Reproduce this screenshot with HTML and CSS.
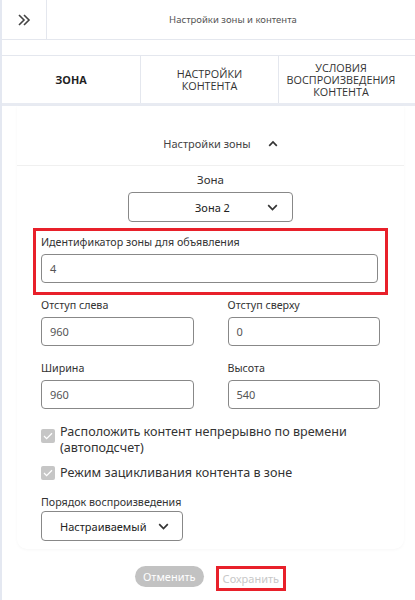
FILE: index.html
```html
<!DOCTYPE html>
<html lang="ru">
  <head>
    <meta charset="UTF-8" />
    <meta name="viewport" content="width=device-width, initial-scale=1.0" />
    <title>Настройки зоны и контента</title>
    <link rel="stylesheet" href="styles.css">
  </head>
  <body>
    <div class="page">
      <!-- верхняя панель -->
      <div class="topbar">
        <div class="toggle">
          <svg width="14" height="14" viewBox="0 0 14 14">
            <path d="M2 2l5 5-5 5M7 2l5 5-5 5" fill="none" stroke="#444" stroke-width="1.6" />
          </svg>
        </div>
        <div class="topbar-title">Настройки зоны и контента</div>
      </div>
      <div class="spacer"></div>

      <!-- вкладки -->
      <div class="tabs">
        <div class="tab active">ЗОНА</div>
        <div class="tab">НАСТРОЙКИ<br />КОНТЕНТА</div>
        <div class="tab">УСЛОВИЯ<br />ВОСПРОИЗВЕДЕНИЯ<br />КОНТЕНТА</div>
      </div>

      <div class="content">
        <div class="card">
          <div class="card-head">
            Настройки зоны
            <svg width="10" height="7" viewBox="0 0 10 7">
              <path d="M1.2 5.8L5 2l3.8 3.8" fill="none" stroke="#333" stroke-width="1.7" />
            </svg>
          </div>

          <div class="zone-select">
            <div class="zone-label">Зона</div>
            <div class="select zone">
              <span>Зона 2</span>
              <svg width="11" height="7" viewBox="0 0 11 7">
                <path d="M1.2 1.2L5.5 5.5l4.3-4.3" fill="none" stroke="#333" stroke-width="1.7" />
              </svg>
            </div>
          </div>

          <!-- выделенное поле -->
          <div class="highlight">
            <label class="field-label">Идентификатор зоны для объявления</label>
            <div class="input">4</div>
          </div>

          <div class="row">
            <div class="field">
              <label class="field-label">Отступ слева</label>
              <div class="input">960</div>
            </div>
            <div class="field">
              <label class="field-label">Отступ сверху</label>
              <div class="input">0</div>
            </div>
          </div>

          <div class="row">
            <div class="field">
              <label class="field-label">Ширина</label>
              <div class="input">960</div>
            </div>
            <div class="field">
              <label class="field-label">Высота</label>
              <div class="input">540</div>
            </div>
          </div>

          <div class="check first">
            <span class="box">
              <svg width="10" height="8" viewBox="0 0 10 8">
                <path d="M1 4l2.6 2.6L9 1.2" fill="none" stroke="#fff" stroke-width="1.3" />
              </svg>
            </span>
            <span>Расположить контент непрерывно по времени (автоподсчет)</span>
          </div>
          <div class="check second">
            <span class="box">
              <svg width="10" height="8" viewBox="0 0 10 8">
                <path d="M1 4l2.6 2.6L9 1.2" fill="none" stroke="#fff" stroke-width="1.3" />
              </svg>
            </span>
            <span>Режим зацикливания контента в зоне</span>
          </div>

          <div class="order">
            <label class="field-label">Порядок воспроизведения</label>
            <div class="select order-select">
              <span>Настраиваемый</span>
              <svg width="11" height="7" viewBox="0 0 11 7">
                <path d="M1.2 1.2L5.5 5.5l4.3-4.3" fill="none" stroke="#333" stroke-width="1.7" />
              </svg>
            </div>
          </div>
        </div>

        <!-- кнопки -->
        <div class="actions">
          <button class="btn-cancel">Отменить</button>
          <button class="btn-save">Сохранить</button>
        </div>
      </div>
    </div>
  </body>
</html>
```

FILE: styles.css
```css
/* базовые стили */
body {
  margin: 0;
  font-family: "Noto Sans", sans-serif;
  color: #333;
  background-color: #fff;
}

.page {
  width: 413px;
  min-height: 600px;
  border-left: 2px solid #e4e8f1;
}

/* верхняя панель */
.topbar {
  display: flex;
  height: 39px;
  border-bottom: 1px solid #e4e7ee;
}

.toggle {
  width: 44px;
  display: flex;
  align-items: center;
  justify-content: center;
  border-right: 1px solid #e4e7ee;
}

.topbar-title {
  flex: 1;
  display: flex;
  align-items: center;
  justify-content: center;
  padding-left: 4px;
  font-size: 9.5px;
  color: #555;
}

.spacer {
  height: 15px;
  border-bottom: 1px solid #e4e7ee;
}

/* вкладки */
.tabs {
  display: flex;
  height: 47px;
  border-bottom: 3px solid #e8ebf2;
}

.tab {
  display: flex;
  align-items: center;
  justify-content: center;
  text-align: center;
  font-family: "Open Sans", sans-serif;
  font-size: 10.8px;
  line-height: 12px;
  color: #333;
  border-right: 1px solid #e4e7ee;
}

.tab:nth-child(1) {
  width: 138px;
}

.tab:nth-child(2) {
  width: 137px;
}

.tab:nth-child(3) {
  width: 124px;
  border-right: none;
}

.tab.active {
  font-weight: 700;
  color: #222;
}

/* карточка */
.content {
  padding: 0 11px 0 15px;
}

.card {
  background-color: #fff;
  border-radius: 0 0 10px 10px;
  box-shadow: 0 1px 3px rgba(0, 0, 0, 0.035);
  padding: 0 24px 8px 24px;
}

.card-head {
  height: 44px;
  display: flex;
  align-items: center;
  justify-content: center;
  gap: 17px;
  padding-left: 20px;
  padding-top: 15px;
  margin: 0 -24px;
  border-bottom: 1px solid #f0f0f0;
  font-size: 11px;
  color: #444;
}

.zone-select {
  display: flex;
  flex-direction: column;
  align-items: center;
  padding-top: 6px;
}

.zone-label {
  font-size: 11.5px;
  line-height: 16px;
  margin-bottom: 4px;
}

.select {
  box-sizing: border-box;
  display: flex;
  align-items: center;
  border: 1px solid #888;
  border-radius: 4px;
  font-size: 11px;
  color: #222;
}

.select.zone {
  width: 165px;
  height: 30px;
  padding: 0 14px 0 66px;
  justify-content: space-between;
}

/* поля */
.highlight {
  margin: 6px -8px 0 -8px;
  border: 3px solid #e8202a;
  padding: 3px 7px 9px 5px;
}

.field-label {
  display: block;
  font-size: 10.7px;
  line-height: 16px;
  margin-bottom: 4px;
  color: #333;
}

.input {
  box-sizing: border-box;
  height: 29px;
  border: 1px solid #888;
  border-radius: 4px;
  padding: 0 8px;
  display: flex;
  align-items: center;
  font-size: 11px;
  color: #555;
}

.row {
  display: flex;
  gap: 34px;
  margin-top: 2px;
}

.row + .row {
  margin-top: 14px;
}

.field {
  flex: 1;
}

/* чекбоксы */
.check {
  display: flex;
  align-items: flex-start;
  gap: 5px;
  font-size: 12.6px;
  line-height: 16px;
  color: #333;
}

.check.first {
  margin-top: 15px;
}

.check.second {
  margin-top: 9px;
}

.box {
  flex: none;
  width: 14px;
  height: 14px;
  border-radius: 2px;
  background-color: #c6c6c6;
  display: flex;
  align-items: center;
  justify-content: center;
}

.check.first .box {
  margin-top: 5px;
}

.check.second .box {
  margin-top: 1px;
}

.order {
  margin-top: 13px;
}

.order .field-label {
  margin-bottom: 1px;
}

.select.order-select {
  width: 142px;
  height: 30px;
  padding: 0 13px 0 18px;
  justify-content: space-between;
}

/* кнопки */
.actions {
  display: flex;
  align-items: flex-start;
  justify-content: center;
  gap: 12px;
  padding: 17px 0 0 0;
}

.actions button {
  font-family: "Noto Sans", sans-serif;
  font-size: 11px;
  cursor: pointer;
}

.btn-cancel {
  background-color: #c2c2c2;
  color: #fff;
  border: none;
  border-radius: 11px;
  height: 21px;
  padding: 0 8px;
}

.btn-save {
  background-color: #fff;
  color: #c8c8c8;
  border: 3px solid #e8202a;
  height: 25px;
  padding: 0 4px;
}
```
